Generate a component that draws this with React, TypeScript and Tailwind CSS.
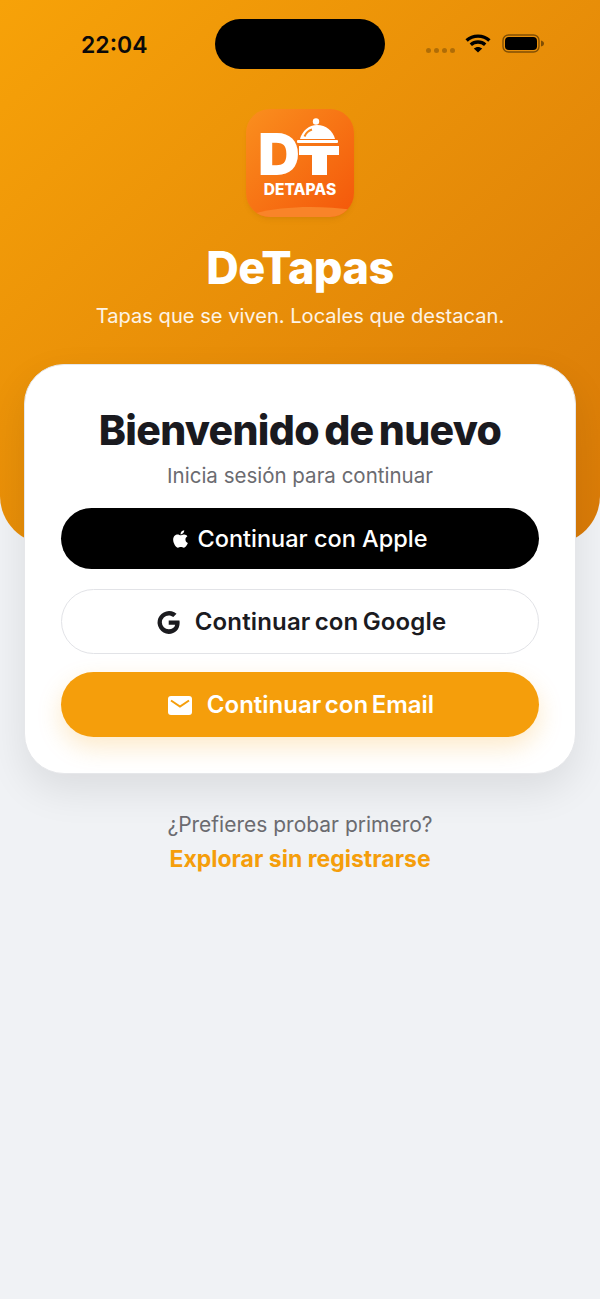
const font = { fontFamily: '"Inter", "Liberation Sans", sans-serif' };

function Wifi() {
  return (
    <svg width="26" height="19" viewBox="0 0 26 19" fill="none" stroke="#000" strokeWidth="3.4">
      <path d="M1.600 6.400C7.800 .7 18.200 .7 24.400 6.400" />
      <path d="M5.800 10.700C9.800 7 16.200 7 20.200 10.700" />
      <path d="M13 18.600 8.800 14.600C11.200 12.400 14.800 12.400 17.200 14.600Z" fill="#000" stroke="none" />
    </svg>
  );
}

function Battery() {
  return (
    <svg width="42" height="19" viewBox="0 0 42 19">
      <rect x="1" y="1" width="36" height="17" rx="5.500" fill="none" stroke="#000" strokeOpacity=".45" strokeWidth="1.400" />
      <rect x="3" y="3" width="32" height="13" rx="3.800" fill="#000" />
      <path d="M39 6.500C41 7 42 8 42 9.500S41 12 39 12.500Z" fill="#000" fillOpacity=".45" />
    </svg>
  );
}

function Logo() {
  return (
    <svg width="108" height="108" viewBox="0 0 108 108" className="block rounded-[24px]">
      <defs>
        <linearGradient id="lg" x1="0" y1="0" x2="1" y2="1">
          <stop offset="0" stopColor="#fa8f1e" />
          <stop offset="1" stopColor="#f4570a" />
        </linearGradient>
      </defs>
      <rect width="108" height="108" fill="url(#lg)" />
      <path d="M0 107C30 97 70 96 108 101V108H0Z" fill="#f98429" />
      <text x="12" y="66" fontFamily="Inter, sans-serif" fontWeight="900" fontSize="58" fill="#fff">D</text>
      <path d="M53 37H93V46H81V66H66V46H53Z" fill="#fff" />
      <circle cx="70" cy="12.500" r="3.200" fill="#fff" />
      <path d="M54 30C56 22 63 16 71 16C80 16 87 22 89 30Z" fill="#fff" />
      <path d="M58.500 27.500C60 24 62.500 21.500 66 20.500" fill="none" stroke="#f98a20" strokeWidth="2" />
      <rect x="51" y="31" width="41" height="3" rx="1" fill="#fff" />
      <text x="54" y="86" textAnchor="middle" fontFamily="Inter, sans-serif" fontWeight="800" fontSize="15.500" fill="#fff">DETAPAS</text>
    </svg>
  );
}

function AppleIcon() {
  return (
    <svg width="17" height="20" viewBox="0 0 384 512" fill="#fff">
      <path d="M318.700 268.700c-.2-36.700 16.400-64.400 50-84.800-18.800-26.900-47.200-41.700-84.700-44.600-35.500-2.800-74.300 20.700-88.500 20.700-15 0-49.400-19.700-76.400-19.700C63.300 141.200 4 184.800 4 273.500q0 39.300 14.400 81.200c12.800 36.700 59 126.700 107.200 125.200 25.200-.6 43-17.900 75.800-17.900 31.800 0 48.300 17.900 76.400 17.900 48.600-.7 90.400-82.500 102.600-119.300-65.200-30.700-61.700-90-61.700-91.900zm-56.600-164.200c27.300-32.400 24.800-61.900 24-72.500-24.100 1.400-52 16.400-67.900 34.900-17.500 19.800-27.800 44.300-25.600 71.900 26.100 2 49.900-11.400 69.500-34.300z" />
    </svg>
  );
}

function GoogleIcon() {
  return (
    <svg width="25" height="25" viewBox="0 0 24 24" fill="#1b1b1f">
      <path d="M12.200 10v4.100h6.200c-.5 2.700-2.800 4.300-6.200 4.300a6.600 6.600 0 0 1 0-13.200c1.700 0 3.200.6 4.400 1.600l3.100-3.100A11 11 0 1 0 12.200 23c6.300 0 10.500-4.400 10.500-10.700 0-.8-.1-1.600-.2-2.300Z" />
    </svg>
  );
}

function MailIcon() {
  return (
    <svg width="24" height="19" viewBox="0 0 24 19">
      <rect width="24" height="19" rx="3" fill="#fff" />
      <path d="M3 4.500 12 10.500 21 4.500" fill="none" stroke="#f59e0b" strokeWidth="2" />
    </svg>
  );
}

export default function App() {
  return (
    <div className="min-h-[1299px] bg-[#f0f2f5] overflow-hidden" style={font}>
      <header className="h-[544px] rounded-b-[48px] bg-gradient-to-br from-[#f7a208] to-[#d97a08] flex flex-col items-center">
        <div className="w-full h-[88px] flex items-start shrink-0 pt-[19px]">
          <div className="w-[215px] pl-[81px] pt-[11px] text-[23px] leading-[30px] font-semibold text-[#0a0a0a]">22:04</div>
          <div className="w-[170px] h-[50px] rounded-[25px] bg-black shrink-0" />
          <div className="flex items-start ml-[41px] pt-[15px]">
            <div className="flex gap-[3px] mt-[14px] mr-[10px]">
              <span className="w-[5px] h-[5px] rounded-full bg-black/25" />
              <span className="w-[5px] h-[5px] rounded-full bg-black/25" />
              <span className="w-[5px] h-[5px] rounded-full bg-black/25" />
              <span className="w-[5px] h-[5px] rounded-full bg-black/25" />
            </div>
            <div className="mr-[11px]"><Wifi /></div>
            <Battery />
          </div>
        </div>
        <div className="mt-[21px] shadow-md shadow-black/5 rounded-[24px]"><Logo /></div>
        <h1 className="mt-[23px] text-[45px] leading-[56px] font-extrabold tracking-[-0.5px] text-white">DeTapas</h1>
        <p className="mt-[6px] text-[20.100px] leading-[28px] text-white/90">Tapas que se viven. Locales que destacan.</p>
      </header>
      <main className="-mt-[180px] mx-[24px] h-[410px] rounded-[40px] bg-white border border-[#e6e7ea] shadow-[0_16px_40px_rgba(0,0,0,0.09)] px-[36px] pt-[40px] flex flex-col items-center">
        <h2 className="text-[41px] leading-[50px] font-extrabold tracking-[-0.7px] [word-spacing:-3px] text-[#1a1a1f] whitespace-nowrap">Bienvenido de nuevo</h2>
        <p className="mt-[7px] text-[20.500px] leading-[28px] text-[#6b6b70]">Inicia sesión para continuar</p>
        <button className="mt-[18px] w-full h-[61px] rounded-full bg-black text-white text-[23.500px] font-medium flex items-center justify-center gap-[8px] shrink-0">
          <AppleIcon />
          <span>Continuar con Apple</span>
        </button>
        <button className="mt-[20px] w-full h-[65px] pt-[1px] pl-[2px] rounded-full bg-white border border-[#e2e3e7] text-[#1b1b1f] text-[24px] font-semibold tracking-[0.15px] [word-spacing:-2px] flex items-center justify-center gap-[14px] shrink-0">
          <GoogleIcon />
          <span>Continuar con Google</span>
        </button>
        <button className="mt-[18px] w-full h-[65px] pt-[1px] pl-[2px] rounded-full bg-[#f59e0b] shadow-[0_10px_24px_rgba(247,159,12,0.22)] text-white text-[24px] font-semibold [word-spacing:-2.500px] flex items-center justify-center gap-[15px] shrink-0">
          <MailIcon />
          <span>Continuar con Email</span>
        </button>
      </main>
      <section className="mt-[35px] flex flex-col items-center">
        <p className="text-[21px] leading-[32px] text-[#6b6b70]">¿Prefieres probar primero?</p>
        <button className="mt-[1px] text-[23px] leading-[34px] font-bold text-[#f59e0b]">Explorar sin registrarse</button>
      </section>
    </div>
  );
}
